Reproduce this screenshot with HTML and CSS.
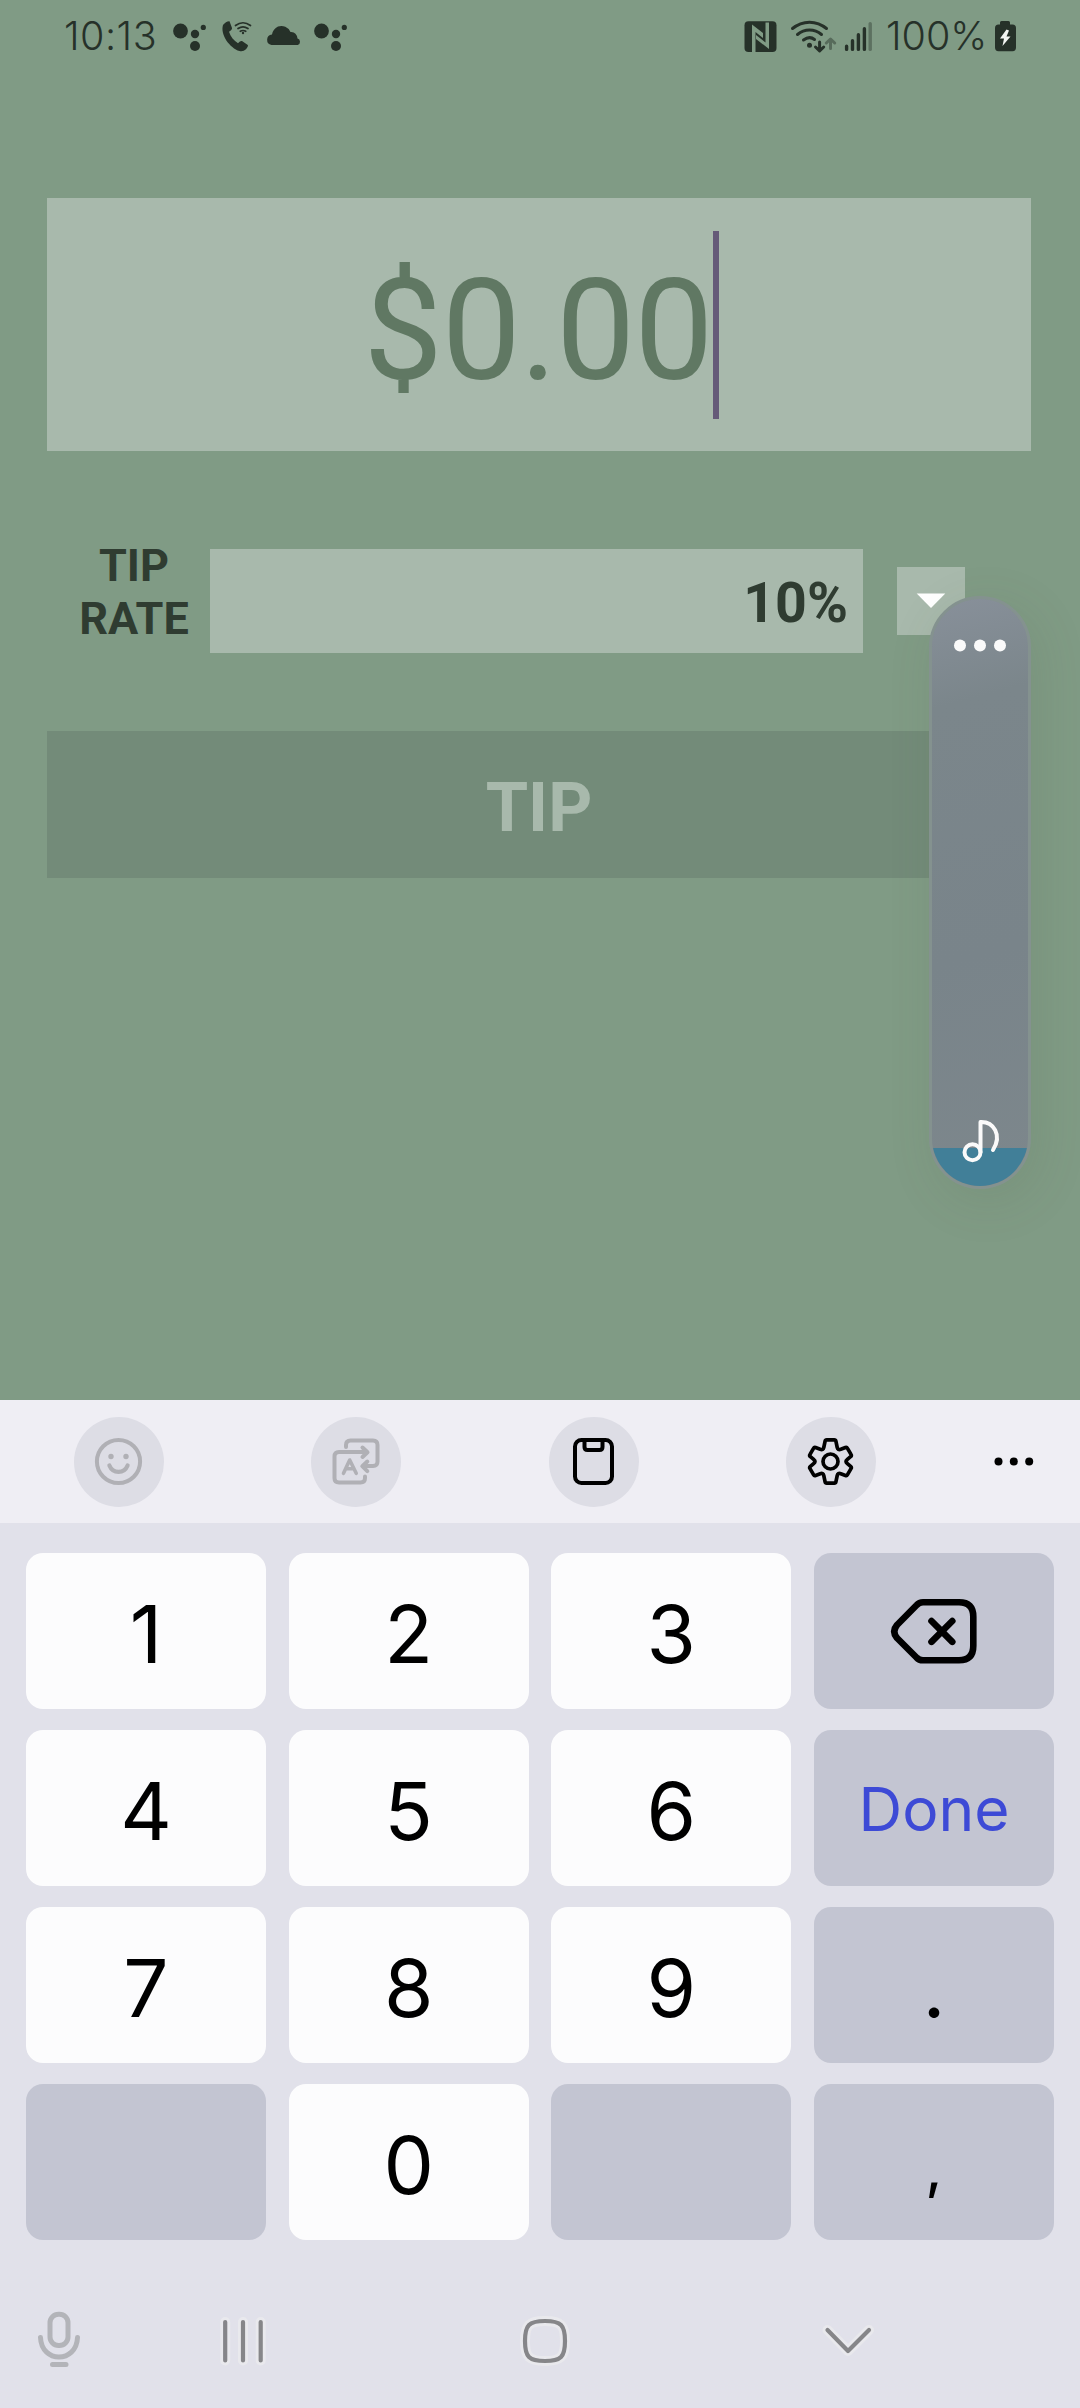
FILE: index.html
```html
<!DOCTYPE html>
<html lang="en">
<head>
<meta charset="utf-8">
<title>Tip calculator</title>
<link rel="stylesheet" href="styles.css">
</head>
<body>
<svg class="defs" width="0" height="0">
  <symbol id="dots" viewBox="170 18 40 36"><circle cx="180.5" cy="31" r="7.4"/><circle cx="195" cy="34" r="4.2"/><circle cx="195" cy="46" r="5"/><circle cx="203.3" cy="27.4" r="2.6"/></symbol>
</svg>
<main class="app">
  <header class="status">
    <span class="time">10:13</span>
    <svg width="40" height="36"><use href="#dots"/></svg>
    <svg width="54" height="36" viewBox="210 18 54 36">
      <path d="M223 25q3-4 6.500-3.800l2.500 6.800q.4 1.400-3 3.800c1.500 5 5 9 9 11.500q2.500-2.800 4-2.200l5.800 4q.8 1-1.800 4.200-3 2.800-6.500 1.800C230 48 220 35 223 25z"/>
      <g class="line" stroke-width="1.700"><path d="M235.500 25.500q7.500-5.500 15 0M238 28.500q5-3.400 10 0M240.300 31.300q2.700-1.600 5.400 0"/></g><circle cx="243" cy="33" r="1.200"/>
    </svg>
    <svg width="47" height="36" viewBox="264 18 47 36"><path d="M271.500 45a5.300 5.300 0 0 1 .5-10.500A11 11 0 0 1 278 26.600a10 10 0 0 1 12.500 5.400q6-.5 7 6.500a3.400 3.400 0 0 1 .2 6.500z"/></svg>
    <svg width="40" height="36"><use href="#dots"/></svg>
    <svg class="right" width="46" height="36" viewBox="740 18 46 36">
      <rect x="744.500" y="21.300" width="32" height="30.700" rx="4"/>
      <path class="cutfill" d="M752 24.500l11 8.500v5l-7.500-6v20h-3.500zM769 49l-13-10v-4l9.500 7.500v-20h3.500z"/>
    </svg>
    <svg width="54" height="36" viewBox="786 18 54 36">
      <g class="line" stroke-width="3"><path d="M792.500 28.500c10-8.500 24-8.500 34 0M797.500 34.500c7-6 17-6 24 0M803.500 40q6-4.500 11-.5M819.600 42v8.500M815.500 47l4.100 4 4.100-4"/><path opacity=".45" d="M830.500 48.500V39.500M826.300 43l4.200-4 4.200 4"/></g><circle cx="809.500" cy="45.200" r="2.500"/>
    </svg>
    <svg width="36" height="36" viewBox="840 18 36 36"><g class="line" stroke-width="3.400"><path d="M846.600 46.200v3.200M852.500 40.700v8.700M858.400 34.700v14.700M864.400 28.700v20.700"/><path opacity=".4" d="M870.200 23.700v25.700"/></g></svg>
    <span class="pct">100%</span>
    <svg width="28" height="36" viewBox="992 18 28 36"><path d="M1001.500 21h7q1.500 0 1.500 1.500V24.500h2.500q3.500 0 3.500 3.500v19.500q0 3.700-3.500 3.700h-14q-3.500 0-3.500-3.700V28q0-3.500 3.500-3.500h1.500v-2q0-1.500 1.500-1.500z"/><path class="bolt" d="M1006.500 29.500l-6.500 9h4l-1.500 7.500 8-9.500h-4l2.500-6z"/></svg>
  </header>
  <section class="form">
    <div class="amount"><span class="value"><span class="digits">$0.00</span></span></div>
    <div class="rate">
      <label class="rate-label">TIP<br>RATE</label>
      <div class="rate-value">10%</div>
      <div class="drop"><svg width="30" height="16" viewBox="0 0 30 16"><path d="M.7.500h28.600L15 15z"/></svg></div>
    </div>
    <div class="tip">TIP</div>
  </section>
  <aside class="volume">
    <div class="level"></div>
    <svg class="vol-icons" width="102" height="593" viewBox="929 596 102 593">
      <circle cx="960" cy="645.500" r="6"/><circle cx="980" cy="645.500" r="6"/><circle cx="1000" cy="645.500" r="6"/>
      <g class="note"><circle cx="972.500" cy="1152.300" r="8"/><path d="M980.500 1152v-30c13-.5 22 13 12.500 28"/></g>
    </svg>
  </aside>
</main>
<section class="keyboard">
  <nav class="tools">
    <span class="tool dim"><svg width="60" height="60" viewBox="-30 -30 60 60"><circle cx="-.5" cy="-.5" r="21.600" stroke-width="4"/><circle class="solid" cx="-8" cy="-5.500" r="2.700"/><circle class="solid" cx="7" cy="-5.500" r="2.700"/><path d="M-9.600 3.500c3.500 8.600 14.700 8.600 18.200 0" stroke-width="4.200"/></svg></span>
    <span class="tool dim"><svg width="60" height="60" viewBox="326 1431 60 60" stroke-width="4"><path d="M346 1446v-2q0-4.500 4.500-4.500h22.500q4.500 0 4.500 4.500v16.500q0 4.500-4.500 4.500h-10M367.300 1460.500l-5 4.700 5 5M362.500 1446.500l5 4.800-5 4.700M366 1451h-27q-4.500 0-4.500 4.500v21.500q0 4.500 4.500 4.500h21.500q4.500 0 4.500-4.500v-1.500"/><path stroke-width="3.600" d="M343.500 1472.300l6.200-13.300 6.500 13.300M346 1467.800h7.500"/></svg></span>
    <span class="tool"><svg width="60" height="60" viewBox="564 1431 60 60" stroke-width="4"><rect x="575" y="1439" width="37" height="43" rx="6.500"/><path d="M584.500 1439v7q0 3 3 3h12q3 0 3-3v-7"/></svg></span>
    <span class="tool"><svg width="60" height="60" viewBox="801 1431 60 60" stroke-width="3.700"><circle cx="830.500" cy="1460.500" r="7.500"/><path d="M826.700 1438.800h7.600q1.300 0 1.600 1.300l1.300 6.200q.6 3 3.600 2l4.600-1.700q1.400-.5 2.100.8l3.500 6q.8 1.300-.4 2.300l-3.500 3q-2.200 1.800 0 3.600l3.500 3q1.200 1 .4 2.300l-3.500 6q-.7 1.300-2.100.8l-4.600-1.700q-3-1-3.600 2l-1.300 6.200q-.3 1.300-1.600 1.300h-7.600q-1.300 0-1.600-1.300l-1.300-6.200q-.6-3-3.600-2l-4.600 1.700q-1.400.5-2.100-.8l-3.500-6q-.8-1.300.4-2.300l3.500-3q2.200-1.800 0-3.600l-3.500-3q-1.200-1-.4-2.300l3.500-6q.7-1.300 2.100-.8l4.600 1.700q3 1 3.600-2l1.300-6.200q.3-1.300 1.600-1.300z"/></svg></span>
    <svg class="more" width="42" height="10" viewBox="0 0 42 10"><circle cx="5.500" cy="4.500" r="4"/><circle cx="20.800" cy="4.500" r="4"/><circle cx="36.200" cy="4.500" r="4"/></svg>
  </nav>
  <div class="keys">
    <span class="key">1</span><span class="key">2</span><span class="key">3</span>
    <span class="key fn"><svg width="90" height="70" viewBox="889 1596 90 70"><path d="M923 1602.300h36q14.300 0 14.300 14.500v29q0 14.500-14.300 14.500h-36q-4 0-6.500-2.800l-19.500-19.500q-5.500-6.500 0-13l19.500-19.800q2.700-2.900 6.500-2.900z"/><path d="M931.500 1621l20.800 20.800M952.300 1621l-20.800 20.800"/></svg></span>
    <span class="key">4</span><span class="key">5</span><span class="key">6</span><span class="key fn done">Done</span>
    <span class="key">7</span><span class="key">8</span><span class="key">9</span><span class="key fn">.</span>
    <span class="key fn"></span><span class="key">0</span><span class="key fn"></span><span class="key fn comma">,</span>
  </div>
  <footer class="nav">
    <svg class="mic" width="60" height="80" viewBox="29 2301 60 80"><rect x="50" y="2314.300" width="18" height="31.200" rx="8.500"/><path d="M40.500 2337.500c1 26 36 26 37 0M52.500 2364.500h13.500"/></svg>
    <svg class="recents" width="60" height="80" viewBox="213 2301 60 80"><path class="halo" d="M225.200 2322v38.500M243 2322v38.500M260.700 2322v38.500"/><path d="M225.200 2322v38.500M243 2322v38.500M260.700 2322v38.500"/></svg>
    <svg class="home" width="60" height="80" viewBox="515 2301 60 80"><path class="halo" d="M545 2321c16 0 20 4 20 20s-4 20-20 20-20-4-20-20 4-20 20-20z"/><path d="M545 2321c16 0 20 4 20 20s-4 20-20 20-20-4-20-20 4-20 20-20z"/></svg>
    <svg class="hide" width="60" height="80" viewBox="818 2301 60 80"><path class="halo" d="M827.500 2330l20.500 21 21-21"/><path d="M827.500 2330l20.500 21 21-21"/></svg>
  </footer>
</section>
</body>
</html>
```
FILE: styles.css
```css
* { box-sizing: border-box; }
body { margin: 0; width: 1080px; height: 2408px; overflow: hidden; font-family: Roboto, "Liberation Sans", sans-serif; }
svg { display: block; flex: none; }
.defs { position: absolute; }

.app { position: relative; height: 1400px; background: #809b85; overflow: hidden; }
.status { display: flex; align-items: center; height: 72px; padding: 0 60px 0 64px; color: #263129; fill: #263129; font: 300 39.5px/72px Inter, sans-serif; }
.time { width: 106px; letter-spacing: 0.5px; white-space: nowrap; }
.right { margin-left: auto; }
.pct { width: 116px; padding-left: 10px; letter-spacing: 0; white-space: nowrap; }
.line { fill: none; stroke: #263129; stroke-linecap: round; stroke-linejoin: round; }
.cutfill { fill: #809b85; }
.bolt { fill: #f2f5f2; }

.form { display: flex; flex-direction: column; padding: 126px 49px 0 47px; }
.amount { display: flex; align-items: center; justify-content: center; height: 253px; background: #a8b9ac; }
.value { height: 188px; border-right: 6px solid #655a78; color: #607863; font-size: 141px; line-height: 189px; letter-spacing: -1px; margin-left: 4px; }
.digits { display: block; padding-top: 6px; line-height: 188px; }
.rate { display: flex; height: 104px; margin-top: 98px; color: #2f3c31; font-weight: 700; }
.rate-label { width: 163px; padding: 0 0 0 11px; margin-top: -10px; text-align: center; font-size: 45px; line-height: 53px; }
.rate-value { width: 653px; padding-right: 15px; background: #a8b9ac; text-align: right; font-size: 55.5px; line-height: 109px; }
.drop { display: flex; align-items: center; justify-content: center; width: 68px; height: 68px; margin: 18px 0 0 34px; background: #a8b9ac; fill: #fff; }
.tip { height: 147px; margin-top: 78px; background: #738b79; color: #a8b9ac; text-align: center; font-size: 68.5px; line-height: 153px; font-weight: 700; }

.volume { position: absolute; left: 929px; top: 596px; width: 102px; height: 593px; border: 3px solid #84928f; border-radius: 51px; background: linear-gradient(165deg, #88909a 0, #7b868b 18%, #79848a 60%, #7d878c 100%); box-shadow: 8px 12px 50px rgba(70, 90, 65, .13); overflow: hidden; }
.level { height: 38px; margin-top: 549px; background: #417f98; }
.vol-icons { position: absolute; left: -3px; top: -3px; fill: #fafafa; }
.note { fill: none; stroke: #fafafa; stroke-width: 4; stroke-linecap: round; stroke-linejoin: round; }

.keyboard { height: 1008px; background: #e1e1ea; font-family: Inter, sans-serif; }
.tools { display: flex; align-items: center; gap: 147.3px; height: 123px; padding-left: 74px; background: #efeef4; }
.tool { display: flex; align-items: center; justify-content: center; flex: none; width: 90px; height: 90px; border-radius: 50%; background: #dddde5; }
.tool svg { fill: none; stroke: #000; stroke-linecap: round; stroke-linejoin: round; }
.tool.dim svg { stroke: #b0b0b5; }
.tool .solid { fill: #b0b0b5; stroke: none; }
.more { margin-left: -30px; }
.keys { display: grid; grid-template-columns: repeat(4, 240px); grid-auto-rows: 156px; gap: 21px 22.67px; padding: 30px 26px 0; }
.key { display: flex; align-items: center; justify-content: center; border-radius: 17px; background: #fcfcfd; color: #000; font-size: 80px; line-height: 151px; padding-top: 5px; }
.fn { background: #c3c5d2; }
.fn svg { margin-top: -5px; fill: none; stroke: #000; stroke-width: 6.6; stroke-linecap: round; stroke-linejoin: round; }
.done { color: #3d4ad6; font-size: 60.5px; padding-top: 2px; }
.comma { font-size: 54px; font-weight: 500; line-height: 142px; padding-top: 14px; }
.nav { display: flex; margin-top: 61px; fill: none; stroke: #868689; stroke-width: 4.2; stroke-linecap: round; stroke-linejoin: round; }
.nav .halo { stroke: #e9e9ed; stroke-width: 10; }
.mic { margin-left: 29px; stroke: #b3b4b9; stroke-width: 5; }
.recents { margin-left: 124px; }
.home { margin-left: 242px; }
.hide { margin-left: 243px; }
```
